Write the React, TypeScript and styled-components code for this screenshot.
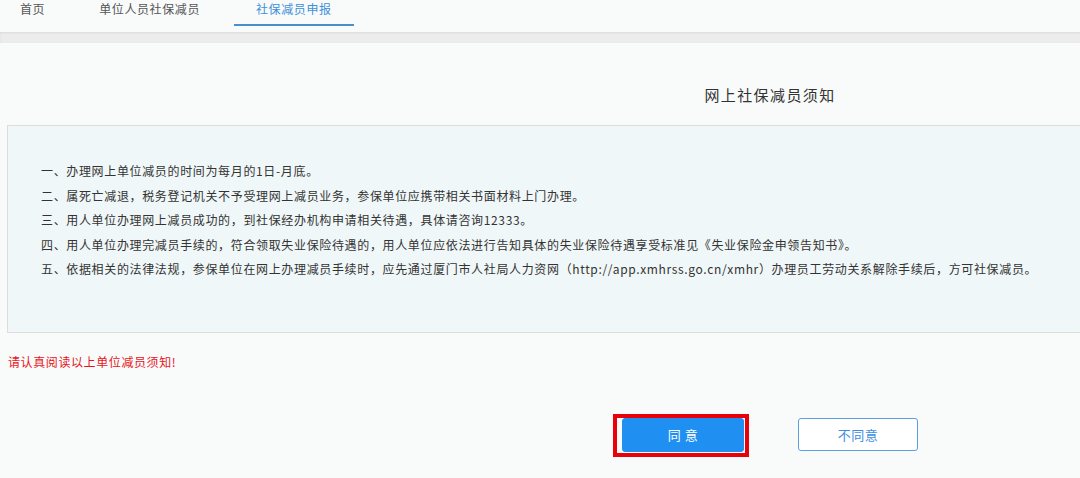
import React from 'react';
import styled, { createGlobalStyle } from 'styled-components';

const GlobalStyle = createGlobalStyle`
  html, body {
    margin: 0;
    padding: 0;
    background: #f8fbfa;
    overflow: hidden;
    font-family: "Noto Sans CJK SC", "Liberation Sans", sans-serif;
  }
`;

const tabs = ['首页', '单位人员社保减员', '社保减员申报'];

const notices = [
  '一、办理网上单位减员的时间为每月的1日-月底。',
  '二、属死亡减退，税务登记机关不予受理网上减员业务，参保单位应携带相关书面材料上门办理。',
  '三、用人单位办理网上减员成功的，到社保经办机构申请相关待遇，具体请咨询12333。',
  '四、用人单位办理完减员手续的，符合领取失业保险待遇的，用人单位应依法进行告知具体的失业保险待遇享受标准见《失业保险金申领告知书》。',
  '五、依据相关的法律法规，参保单位在网上办理减员手续时，应先通过厦门市人社局人力资网（http://app.xmhrss.go.cn/xmhr）办理员工劳动关系解除手续后，方可社保减员。',
];

export default function App() {
  return (
    <Page>
      <GlobalStyle />
      <Nav>
        {tabs.map((t, i) => (
          <Tab key={t} active={i === 2}>
            {t}
          </Tab>
        ))}
      </Nav>
      <NavShadow />
      <Content>
        <Title>网上社保减员须知</Title>
        <NoticeBox>
          {notices.map((n) => (
            <NoticeLine key={n}>{n}</NoticeLine>
          ))}
        </NoticeBox>
        <Warning>请认真阅读以上单位减员须知!</Warning>
        <Actions>
          <Highlight>
            <AgreeButton>同 意</AgreeButton>
          </Highlight>
          <DisagreeButton>不同意</DisagreeButton>
        </Actions>
      </Content>
    </Page>
  );
}

const Page = styled.div`
  width: 1540px;
  min-height: 478px;
  background: #f8fbfa;
`;

const Nav = styled.div`
  display: flex;
  gap: 12px;
  height: 32px;
  padding-left: 0;
  background: #f8fbfa;
`;

const Tab = styled.div<{ active?: boolean }>`
  box-sizing: border-box;
  height: 26px;
  padding: 0 22px;
  line-height: 17px;
  font-size: 12px;
  letter-spacing: 0.6px;
  color: ${(p) => (p.active ? '#3f90da' : '#555')};
  border-bottom: 2px solid ${(p) => (p.active ? '#4a8fc8' : 'transparent')};
  &:first-child {
    padding-left: 20px;
    padding-right: 20px;
  }
`;

const NavShadow = styled.div`
  height: 11px;
  background: #ececec;
  box-shadow: inset 0 1px 2px rgba(0, 0, 0, 0.08);
`;

const Content = styled.div`
  width: 1526px;
  padding-left: 7px;
  display: flex;
  flex-direction: column;
`;

const Title = styled.div`
  margin-top: 43px;
  height: 18px;
  line-height: 18px;
  text-align: center;
  font-size: 15px;
  letter-spacing: 1.4px;
  color: #333;
`;

const NoticeBox = styled.div`
  margin-top: 21px;
  padding: 33px 0 50px 33px;
  background: #f0f7f8;
  border: 1px solid #dcdedc;
  border-right: none;
`;

const NoticeLine = styled.div`
  line-height: 24.5px;
  font-size: 12px;
  letter-spacing: 0.65px;
  color: #333;
  white-space: nowrap;
`;

const Warning = styled.div`
  margin-top: 20px;
  padding-left: 1px;
  line-height: 18px;
  font-size: 12px;
  letter-spacing: 0.6px;
  color: #e8141c;
`;

const Actions = styled.div`
  margin-top: 47px;
  display: flex;
  justify-content: center;
  gap: 54px;
`;

const Highlight = styled.div`
  position: relative;
  &::after {
    content: '';
    position: absolute;
    left: -9px;
    top: -4px;
    right: -5px;
    bottom: -5px;
    border: 4px solid #e8000b;
    pointer-events: none;
  }
`;

const BaseButton = styled.button`
  box-sizing: border-box;
  width: 122px;
  height: 34px;
  border-radius: 3px;
  font-family: "Noto Sans CJK SC", "Liberation Sans", sans-serif;
  font-size: 13px;
  letter-spacing: 0.5px;
  cursor: pointer;
  display: flex;
  align-items: center;
  justify-content: center;
`;

const AgreeButton = styled(BaseButton)`
  background: #1f8ff2;
  border: 1px solid #1f8ff2;
  color: #fff;
`;

const DisagreeButton = styled(BaseButton)`
  width: 120px;
  height: 33px;
  background: #fff;
  border: 1px solid #5c9fe0;
  color: #3d8ee0;
`;
